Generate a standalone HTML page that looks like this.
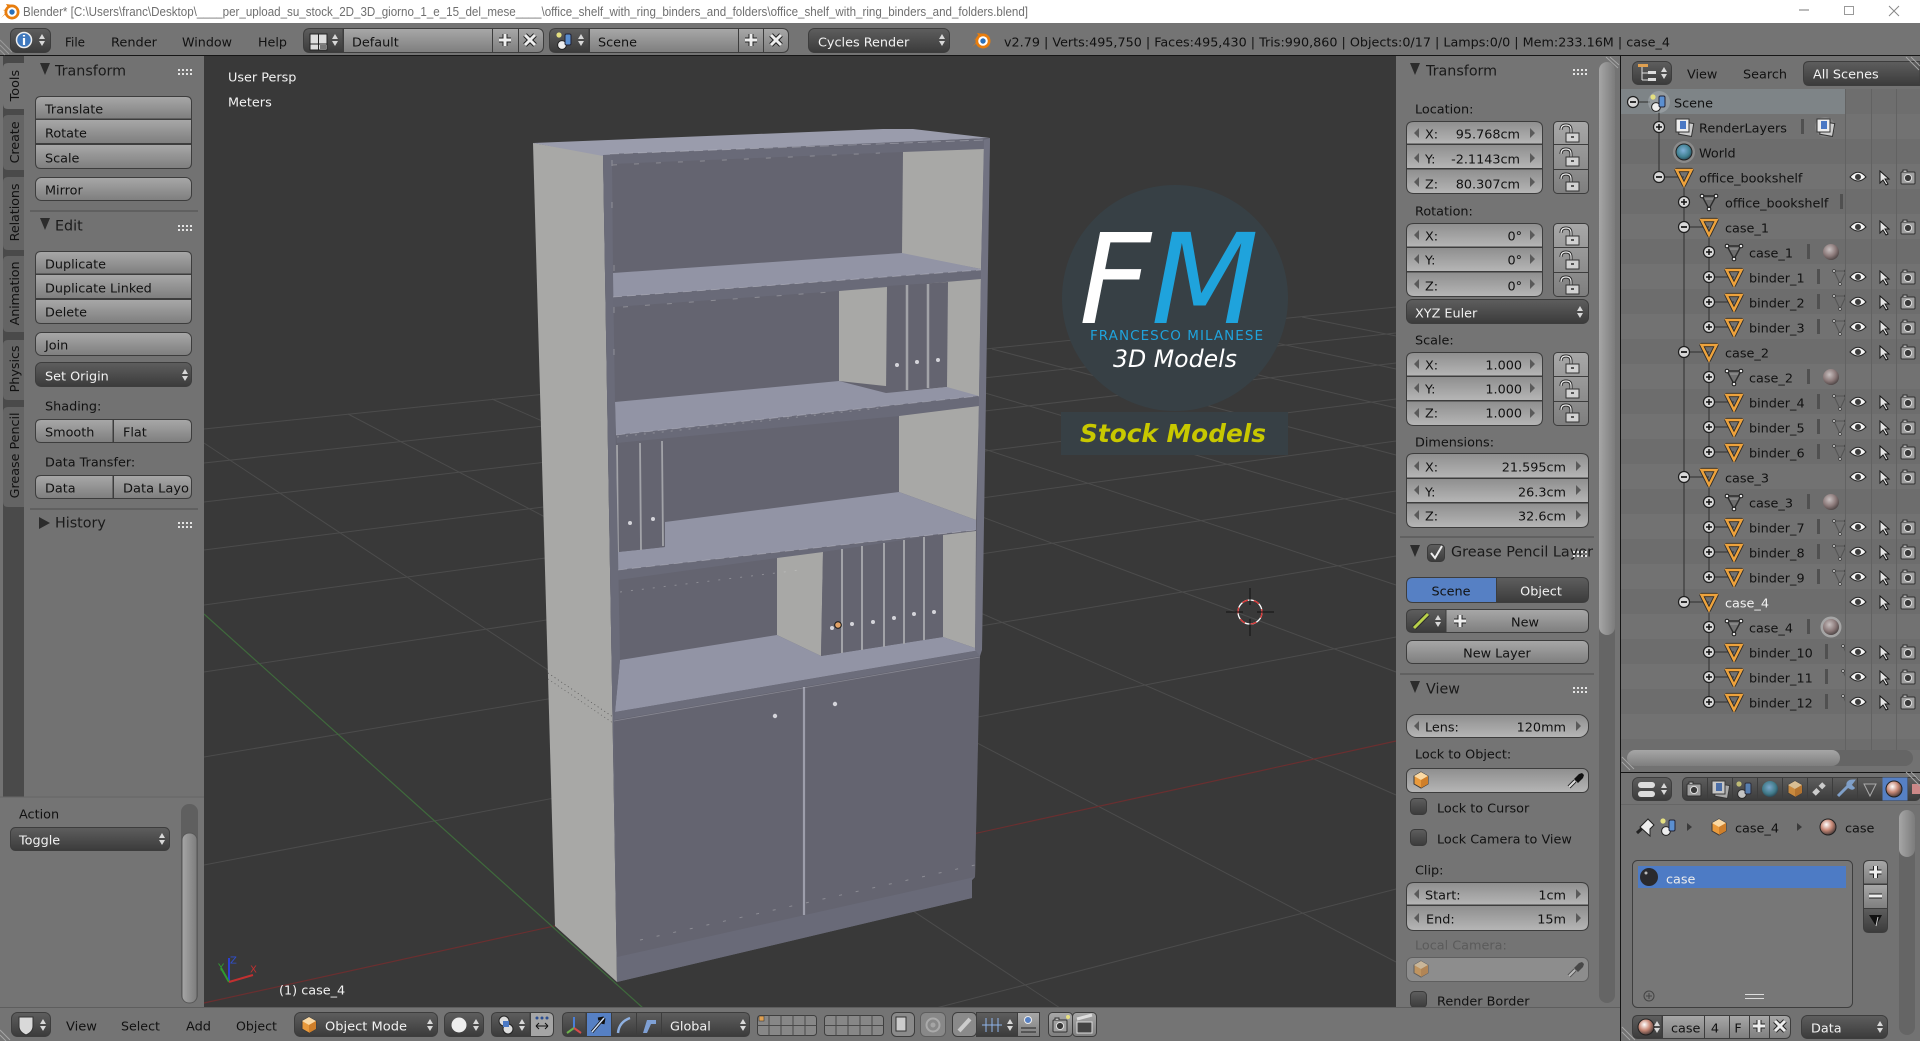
<!DOCTYPE html>
<html><head><meta charset="utf-8"><title>Blender</title>
<style>
html,body{margin:0;padding:0;background:#727272;width:1920px;height:1041px;overflow:hidden}
svg{display:block}
text{font-family:"DejaVu Sans","Liberation Sans",sans-serif;font-size:12.8px;fill:#111;translate:0 -.6px}
.w{fill:#f2f2f2}
.h{font-size:14.3px;fill:#1a1a1a}
.m{text-anchor:middle}
.e{text-anchor:end}
.g{stroke:#3d3d3d;stroke-width:1}
.ar{fill:#5a5a5a}
.k{translate:0 0}
</style></head><body>
<svg width="1920" height="1041" viewBox="0 0 1920 1041" xmlns="http://www.w3.org/2000/svg">
<defs>
<linearGradient id="btn" x1="0" y1="0" x2="0" y2="1"><stop offset="0" stop-color="#a8a8a8"/><stop offset="1" stop-color="#7e7e7e"/></linearGradient>
<linearGradient id="num" x1="0" y1="0" x2="0" y2="1"><stop offset="0" stop-color="#8e8e8e"/><stop offset="1" stop-color="#b6b6b6"/></linearGradient>
<linearGradient id="drk" x1="0" y1="0" x2="0" y2="1"><stop offset="0" stop-color="#5e5e5e"/><stop offset="1" stop-color="#3b3b3b"/></linearGradient>
<linearGradient id="thm" x1="0" y1="0" x2="1" y2="0"><stop offset="0" stop-color="#a6a6a6"/><stop offset="1" stop-color="#7c7c7c"/></linearGradient>
<linearGradient id="thh" x1="0" y1="0" x2="0" y2="1"><stop offset="0" stop-color="#a6a6a6"/><stop offset="1" stop-color="#7e7e7e"/></linearGradient>
<radialGradient id="mat" cx=".4" cy=".35" r=".75"><stop offset="0" stop-color="#c8c0c0"/><stop offset=".55" stop-color="#8a7878"/><stop offset="1" stop-color="#3c3636"/></radialGradient>
<radialGradient id="mt2" cx=".4" cy=".35" r=".7"><stop offset="0" stop-color="#ffffff"/><stop offset=".5" stop-color="#c98a78"/><stop offset="1" stop-color="#3a3030"/></radialGradient>
<radialGradient id="glb" cx=".45" cy=".4" r=".6"><stop offset="0" stop-color="#7fb0d8"/><stop offset=".7" stop-color="#3f7f8f"/><stop offset="1" stop-color="#2a4a5a"/></radialGradient>
<clipPath id="colclip"><rect x="1621" y="88" width="224" height="640"/></clipPath>
<symbol id="ob" overflow="visible"><path d="M-7.500-7H7.500L0 8Z" fill="none" stroke="#2a2a2a" stroke-width="4.200" stroke-linejoin="round"/><path d="M-7.500-7H7.500L0 8Z" fill="none" stroke="#eda23c" stroke-width="2.500"/></symbol>
<symbol id="me" overflow="visible"><path d="M-7-6H7L0 7Z" fill="none" stroke="#2c2c2c" stroke-width="1.4"/><path d="M-4-3H4" stroke="#999"/><g fill="#eee" stroke="#111"><circle cx="-7" cy="-6" r="1.8"/><circle cx="7" cy="-6" r="1.8"/><circle cx="0" cy="7" r="1.8"/></g></symbol>
<symbol id="ms" overflow="visible"><path d="M-6-6H6L0 7Z" fill="none" stroke="#555" stroke-width="1.1"/><g fill="#bbb" stroke="#333" stroke-width=".6"><circle cx="-6" cy="-6" r="1.4"/><circle cx="6" cy="-6" r="1.4"/><circle cx="0" cy="7" r="1.4"/></g></symbol>
<symbol id="ey" overflow="visible"><path d="M-8 0Q0-9.500 8 0Q0 8-8 0Z" fill="#f4f4f4" stroke="#222"/><circle r="3" fill="#3c3c3c"/></symbol>
<symbol id="cu" overflow="visible"><path d="M-4-7V5L-1 2 2 7 4 6 1 1H5Z" fill="#e4e4e4" stroke="#151515"/></symbol>
<symbol id="ca" overflow="visible"><rect x="-7" y="-5" width="14" height="12" rx="1" fill="#a0a0a0" stroke="#303030"/><path d="M-5-5V-7H-1V-5" fill="#bbb" stroke="#303030"/><circle cy="1" r="3.6" fill="#3a3a3a" stroke="#e0e0e0"/></symbol>
<symbol id="pl" overflow="visible"><circle r="5.5" fill="#d8d8d8" stroke="#1e1e1e" stroke-width="1.2"/><path d="M-3 0H3M0-3V3" stroke="#111" stroke-width="1.5"/></symbol>
<symbol id="mn" overflow="visible"><circle r="5.5" fill="#d8d8d8" stroke="#1e1e1e" stroke-width="1.2"/><path d="M-3 0H3" stroke="#111" stroke-width="1.7"/></symbol>
<symbol id="ma" overflow="visible"><circle r="8" fill="url(#mat)"/></symbol>
<symbol id="lk" overflow="visible"><path d="M-9-4Q-9-9-4-9Q1-9 1-4V-1" fill="none" stroke="#222" stroke-width="3"/><path d="M-9-4Q-9-9-4-9Q1-9 1-4V-1" fill="none" stroke="#eee" stroke-width="1.2"/><rect x="-4" y="-1" width="13" height="9" fill="#d2d2d2" stroke="#333"/><rect x="1" y="2" width="3" height="2" fill="#555"/></symbol>
<symbol id="ud" overflow="visible"><path d="M-3-1 0-6 3-1ZM-3 1 0 6 3 1Z" fill="#d8d8d8"/></symbol>
<symbol id="tr" overflow="visible"><path d="M0-7H10L5 5Z" fill="#2c2c2c"/></symbol>
<symbol id="dt" overflow="visible"><g fill="#e4e4e4"><rect width="2" height="2"/><rect x="4" width="2" height="2"/><rect x="8" width="2" height="2"/><rect x="12" width="2" height="2"/><rect y="4" width="2" height="2"/><rect x="4" y="4" width="2" height="2"/><rect x="8" y="4" width="2" height="2"/><rect x="12" y="4" width="2" height="2"/></g></symbol>
<symbol id="cb" overflow="visible"><path d="M0-8 7-4V4L0 8-7 4V-4Z" fill="#e99a3c" stroke="#3a3a3a"/><path d="M0-8 7-4 0 0-7-4Z" fill="#fad9a4"/><path d="M0 0 7-4V4L0 8Z" fill="#cf7f2a"/></symbol>
<symbol id="sc" overflow="visible"><circle cx="-3" cy="4" r="4.4" fill="#eee" stroke="#222"/><rect x="0" y="-7" width="6" height="11" rx="1.5" fill="#5b8fd0" stroke="#223"/><circle cx="-6" cy="-6" r="2.6" fill="#e4df80"/></symbol>
<symbol id="rl" overflow="visible"><rect x="-4" y="-5" width="13" height="13" fill="#ccc" stroke="#333" transform="rotate(10)"/><rect x="-8" y="-8" width="13" height="13" fill="#eee" stroke="#333"/><rect x="-4" y="-6" width="6" height="8" fill="#4a78c4"/></symbol>
<symbol id="ed" overflow="visible"><path d="M-7 7-1 1" stroke="#222" stroke-width="4"/><path d="M-7 7-1 1" stroke="#ddd" stroke-width="2"/><path d="M-2-1 3-6 6-7 8-5 7-2 2 3Z" fill="#111"/></symbol>
<symbol id="pb" overflow="visible"><path d="M-6 0H6M0-6V6" stroke="#222" stroke-width="5"/><path d="M-6 0H6M0-6V6" stroke="#eee" stroke-width="3"/></symbol>
<symbol id="xb" overflow="visible"><path d="M-5-5 5 5M5-5-5 5" stroke="#222" stroke-width="5"/><path d="M-5-5 5 5M5-5-5 5" stroke="#eee" stroke-width="3"/></symbol>
<symbol id="bl" overflow="visible"><path d="M-9 7-2 1-7-1-1-2-4-7 3-6Z" fill="#e87d0d"/><circle cx="2" cy="1" r="7.500" fill="#e87d0d"/><circle cx="2" cy="1" r="4.800" fill="#fff"/><circle cx="2" cy="1" r="2.700" fill="#2a6fb8"/></symbol>
</defs>

<!-- base -->
<rect width="1920" height="1041" fill="#727272"/>
<!-- titlebar -->
<rect width="1920" height="23" fill="#fff"/>
<use href="#bl" x="10" y="11"/>
<text class="k" x="23" y="16" textLength="1005" lengthAdjust="spacingAndGlyphs" style="font-family:'Liberation Sans',sans-serif;font-size:13px;fill:#6f6f6f">Blender* [C:\Users\franc\Desktop\____per_upload_su_stock_2D_3D_giorno_1_e_15_del_mese____\office_shelf_with_ring_binders_and_folders\office_shelf_with_ring_binders_and_folders.blend]</text>
<path d="M1799 10H1809" stroke="#777"/><rect x="1844.500" y="6.500" width="9" height="8" fill="none" stroke="#999"/><path d="M1889 6 1899 16M1899 6 1889 16" stroke="#888"/>

<!-- top header -->
<rect y="23" width="1920" height="32" fill="#747474"/>
<rect y="55" width="1920" height="1" fill="#161616"/>
<path d="M0 45 9 54M0 50 5 55M0 40 12 52" stroke="#9a9a9a"/>
<rect class="g" x="10.500" y="28.500" width="40" height="24" rx="6" fill="url(#drk)"/>
<circle cx="24" cy="40" r="7.500" fill="#3f78bd" stroke="#eee" stroke-width="1.500"/><path d="M24 38V45M24 35V36.500" stroke="#fff" stroke-width="2.200"/>
<use href="#ud" x="42" y="40"/>
<text x="65" y="47" textLength="20" lengthAdjust="spacingAndGlyphs">File</text>
<text x="111" y="47" textLength="46" lengthAdjust="spacingAndGlyphs">Render</text>
<text x="182" y="47" textLength="50" lengthAdjust="spacingAndGlyphs">Window</text>
<text x="258" y="47" textLength="29" lengthAdjust="spacingAndGlyphs">Help</text>

<path class="g" d="M343 28.500H310Q303.500 28.500 303.500 35V46Q303.500 52.500 310 52.500H343Z" fill="url(#drk)"/>
<rect class="g" x="343.500" y="28.500" width="149" height="24" fill="url(#btn)"/>
<path class="g" d="M492.500 28.500H537Q543.500 28.500 543.500 35V46Q543.500 52.500 537 52.500H492.500Z" fill="url(#btn)"/>
<path d="M518.500 28.500V52.500" stroke="#3d3d3d"/>
<rect x="310" y="34" width="17" height="16" fill="#ddd" stroke="#222"/><path d="M318.500 34V50M310 44H327" stroke="#222"/><rect x="320" y="45" width="6" height="4" fill="#777"/>
<use href="#ud" x="335" y="40"/>
<text x="352" y="47">Default</text>
<use href="#pb" x="505" y="40"/><use href="#xb" x="530" y="40"/>

<path class="g" d="M589 28.500H556Q549.500 28.500 549.500 35V46Q549.500 52.500 556 52.500H589Z" fill="url(#drk)"/>
<use href="#sc" x="565" y="41"/><use href="#ud" x="581" y="40"/>
<rect class="g" x="589.500" y="28.500" width="149" height="24" fill="url(#btn)"/>
<path class="g" d="M738.500 28.500H782Q788.500 28.500 788.500 35V46Q788.500 52.500 782 52.500H738.500Z" fill="url(#btn)"/>
<path d="M763.500 28.500V52.500" stroke="#3d3d3d"/>
<text x="598" y="47">Scene</text>
<use href="#pb" x="751" y="40"/><use href="#xb" x="776" y="40"/>

<rect class="g" x="808.500" y="28.500" width="141" height="24" rx="6" fill="url(#drk)"/>
<text class="w" x="818" y="47">Cycles Render</text>
<use href="#ud" x="942" y="40"/>
<use href="#bl" x="981" y="40"/>
<text x="1004" y="47" textLength="666" lengthAdjust="spacingAndGlyphs">v2.79 | Verts:495,750 | Faces:495,430 | Tris:990,860 | Objects:0/17 | Lamps:0/0 | Mem:233.16M | case_4</text>

<!-- viewport -->
<rect x="204" y="56" width="1192" height="951" fill="#393939"/>
<g stroke="#4c4c4c" stroke-width="1" fill="none">
<path d="M204 429 1396 307M204 463 1396 333M204 502 1396 363M204 550 1396 399M204 605 1396 441M204 672 1396 491M204 757 1396 556M204 865 1396 637"/>
<path d="M936 1008 1396 889"/>
<path d="M204 443 1060 1008M348 414 1396 962M492 399 1396 795M630 385 1396 672M754 373 1396 585M873 360 1396 514M992 349 1396 455M1100 337 1396 408M1203 327 1396 369M1302 317 1396 336"/>
</g>
<path d="M204 1003 1396 741" stroke="#6a2f30" stroke-width="1.200"/>
<path d="M204 614 643 1008" stroke="#3f6a3c" stroke-width="1.200"/>

<!-- bookshelf -->
<path d="M533 143 555 926 617 982 603 155Z" fill="#a8a8a6"/>
<path d="M533 143 883 129 913 129 990 138 603 156Z" fill="#9a9cac"/>
<path d="M603 155 990 138 975 877 972 880 972 898 617 982Z" fill="#686977"/>
<path d="M610 154 984 140 980 650 614 720Z" fill="#646470"/>
<path d="M610 154 984 140 984 149 903 152 611 164Z" fill="#696a78"/>
<path d="M903 152 984 149 981 269 902 254Z" fill="#a8a8a6"/>
<path d="M613 273 902 253 981 269 981 270 613 297Z" fill="#9294a5"/>
<path d="M613 297 981 270 981 279 839 291 613 307Z" fill="#696a78"/>
<path d="M839 291 981 279 979 396 839 381Z" fill="#a8a8a6"/>
<path d="M887 286 948 282 947 387 886 393Z" fill="#646470"/>
<path d="M907 285 V390M928 284 V388" stroke="#a2a3a8" stroke-width="2.500"/>
<path d="M615 402 839 381 886 393 947 387 979 396 616 435Z" fill="#9294a5"/>
<path d="M616 435 979 396 979 406 899 416 617 443Z" fill="#696a78"/>
<path d="M899 416 979 406 976 520 899 492Z" fill="#a8a8a6"/>
<path d="M665 522 899 492 976 520 976 530 618 570 618 552 665 547Z" fill="#9294a5"/>
<path d="M618 443 663 441 665 547 618 552Z" fill="#646470"/>
<path d="M640 443 641 550M662 441 663 546M617 445 618 552" stroke="#a2a3a8" stroke-width="1.800"/>
<path d="M618 570 976 531 976 535 943 535 823 552 777 558 618 580Z" fill="#696a78"/>
<path d="M777 558 823 552 821 656 777 635Z" fill="#a8a8a6"/>
<path d="M943 535 976 531 975 648 943 637Z" fill="#a8a8a6"/>
<path d="M620 660 777 635 821 656 943 637 975 648 980 650 615 712Z" fill="#9294a5"/>
<path d="M823 552 943 534 943 637 821 656Z" fill="#646470"/>
<path d="M842 549V653M862 546V650M884 543V647M904 540V644M924 537V640" stroke="#a2a3a8" stroke-width="2"/>
<path d="M615 712 981 650 980 656 614 720Z" fill="#6c6d7b"/>
<path d="M614 720 980 656 975 877 617 958Z" fill="#646470"/>
<path d="M617 957 975 877 972 880 972 898 617 982Z" fill="#696a78"/>
<path d="M804 687V915" stroke="#9d9eab" stroke-width="2.200"/>
<path d="M603 155 612 155 613 273 615 402 618 552 620 660 615 712 614 720 612.600 722Z" fill="#6a6b79"/>
<path d="M984 140 990 138 982 650 980 656 975 650 979 396 981 270Z" fill="#717281"/>
<g stroke="#d8d8d8" stroke-width="1" stroke-dasharray="5 17" fill="none" opacity=".35">
<path d="M612 165 880 153M623 307 830 292"/>
<path d="M617 437 880 408" stroke-dasharray="2 7"/>
<path d="M620 592 800 570" stroke-dasharray="2 9"/>
<path d="M612 160V220M614 265V370" stroke-dasharray="6 36"/>
<path d="M640 940 975 865" stroke-dasharray="3 14"/>
</g>
<path d="M610 154 984 140" stroke="#d8d8e0" stroke-width=".8" stroke-dasharray="9 5" opacity=".4"/>
<path d="M613 297 981 270" stroke="#d8d8e0" stroke-width=".8" stroke-dasharray="9 5" opacity=".4"/>
<path d="M616 435 979 396" stroke="#d8d8e0" stroke-width=".8" stroke-dasharray="9 5" opacity=".35"/>
<path d="M618 570 976 530" stroke="#d8d8e0" stroke-width=".8" stroke-dasharray="9 5" opacity=".35"/>
<path d="M614 721 980 657" stroke="#d8d8e0" stroke-width=".8" opacity=".3"/>
<path d="M548 673 613 717" stroke="#555" stroke-width=".8" stroke-dasharray="1 3"/>
<path d="M548 679 613 723" stroke="#666" stroke-width=".8" stroke-dasharray="1 3"/>
<g fill="#d4d4da"><circle cx="897" cy="365" r="2"/><circle cx="917" cy="362" r="2"/><circle cx="938" cy="360" r="2"/><circle cx="630" cy="523" r="2"/><circle cx="653" cy="519" r="2"/><circle cx="832" cy="628" r="2"/><circle cx="852" cy="624" r="2"/><circle cx="873" cy="622" r="2"/><circle cx="894" cy="618" r="2"/><circle cx="914" cy="614" r="2"/><circle cx="934" cy="612" r="2"/><circle cx="775" cy="716" r="2.200"/><circle cx="835" cy="704" r="2.200"/></g>
<circle cx="838" cy="625" r="3.300" fill="#e1a267" stroke="#151515"/>

<!-- 3D cursor -->
<circle cx="1250" cy="612" r="12" fill="none" stroke="#fff" stroke-width="1.300"/>
<circle cx="1250" cy="612" r="12" fill="none" stroke="#d33" stroke-width="1.300" stroke-dasharray="6 6"/>
<path d="M1226 612H1243M1257 612H1274M1250 588V605M1250 619V636" stroke="#111" stroke-width="1"/>

<!-- logo -->
<circle cx="1175" cy="298" r="113" fill="#374045"/>
<rect x="1061" y="412" width="227" height="43" fill="#374045"/>
<text class="k" x="1079" y="323" style="font-size:125px;font-style:italic;fill:#fff">F</text>
<text class="k" x="1151" y="323" style="font-size:125px;font-style:italic;fill:#1fa3dc">M</text>
<text class="k" x="1090" y="340" textLength="173" lengthAdjust="spacing" style="font-size:13.500px;fill:#1fa3dc">FRANCESCO MILANESE</text>
<text class="k" x="1113" y="367" textLength="124" lengthAdjust="spacingAndGlyphs" style="font-size:24px;font-style:italic;fill:#fff">3D Models</text>
<text class="k" x="1080" y="442" textLength="186" lengthAdjust="spacingAndGlyphs" style="font-size:25px;font-style:italic;font-weight:bold;fill:#c8c800">Stock Models</text>

<!-- viewport labels -->
<text class="w" x="228" y="82">User Persp</text>
<text class="w" x="228" y="107">Meters</text>
<text class="w" x="279" y="995">(1) case_4</text>
<path d="M229 982V958" stroke="#2d3fd0" stroke-width="2"/><path d="M229 982 221 968" stroke="#2f9a2f" stroke-width="2"/><path d="M229 982 253 975" stroke="#c23030" stroke-width="2"/>
<text x="230" y="964" style="font-size:10px;fill:#3050d0">Z</text><text x="250" y="973" style="font-size:10px;fill:#c03030">X</text><text x="218" y="971" style="font-size:10px;fill:#30a030">Y</text>

<!-- left tool region -->
<rect x="0" y="56" width="204" height="952" fill="#727272"/>
<rect x="3" y="56" width="21" height="741" fill="#4a4a4a"/>
<path d="M24 63H8Q3 63 3 68V104Q3 109 8 109H24Z" fill="#727272"/>
<path d="M24 115H8Q3 115 3 120V165Q3 170 8 170H24Z" fill="#646464"/>
<path d="M24 177H8Q3 177 3 182V245Q3 250 8 250H24Z" fill="#646464"/>
<path d="M24 256H8Q3 256 3 261V327Q3 332 8 332H24Z" fill="#646464"/>
<path d="M24 340H8Q3 340 3 345V395Q3 400 8 400H24Z" fill="#646464"/>
<path d="M24 407H8Q3 407 3 412V502Q3 507 8 507H24Z" fill="#646464"/>
<text transform="translate(19 102) rotate(-90)">Tools</text>
<text transform="translate(19 164) rotate(-90)" textLength="42">Create</text>
<text transform="translate(19 242) rotate(-90)" textLength="58">Relations</text>
<text transform="translate(19 326) rotate(-90)" textLength="64">Animation</text>
<text transform="translate(19 393) rotate(-90)" textLength="47">Physics</text>
<text transform="translate(19 499) rotate(-90)" textLength="86" lengthAdjust="spacingAndGlyphs">Grease Pencil</text>

<use href="#tr" x="40" y="70"/>
<text class="h" x="55" y="76">Transform</text><use href="#dt" x="178" y="69"/>
<path class="g" d="M35.500 119V102Q35.500 96.500 41 96.500H186Q191.500 96.500 191.500 102V119Z" fill="url(#btn)"/>
<rect class="g" x="35.500" y="119.500" width="156" height="24" fill="url(#btn)"/>
<path class="g" d="M35.500 144.500V163Q35.500 168.500 41 168.500H186Q191.500 168.500 191.500 163V144.500Z" fill="url(#btn)"/>
<text x="45" y="114">Translate</text><text x="45" y="138">Rotate</text><text x="45" y="163">Scale</text>
<rect class="g" x="35.500" y="177.500" width="156" height="23" rx="6" fill="url(#btn)"/>
<text x="45" y="195">Mirror</text>
<path d="M30 211H198" stroke="#4e4e4e"/>
<use href="#tr" x="40" y="225"/>
<text class="h" x="55" y="231">Edit</text><use href="#dt" x="178" y="225"/>
<path class="g" d="M35.500 274V257Q35.500 251.500 41 251.500H186Q191.500 251.500 191.500 257V274Z" fill="url(#btn)"/>
<rect class="g" x="35.500" y="274.500" width="156" height="24" fill="url(#btn)"/>
<path class="g" d="M35.500 299.500V318Q35.500 323.500 41 323.500H186Q191.500 323.500 191.500 318V299.500Z" fill="url(#btn)"/>
<text x="45" y="269">Duplicate</text><text x="45" y="293">Duplicate Linked</text><text x="45" y="317">Delete</text>
<rect class="g" x="35.500" y="332.500" width="156" height="23" rx="6" fill="url(#btn)"/>
<text x="45" y="350">Join</text>
<rect class="g" x="35.500" y="362.500" width="156" height="24" rx="6" fill="url(#drk)"/>
<text class="w" x="45" y="381">Set Origin</text><use href="#ud" x="185" y="375"/>
<text x="45" y="411">Shading:</text>
<path class="g" d="M113 419.500H41Q35.500 419.500 35.500 425V437Q35.500 442.500 41 442.500H113Z" fill="url(#btn)"/>
<path class="g" d="M113.500 419.500H186Q191.500 419.500 191.500 425V437Q191.500 442.500 186 442.500H113.500Z" fill="url(#btn)"/>
<text x="45" y="437">Smooth</text><text x="123" y="437">Flat</text>
<text x="45" y="467">Data Transfer:</text>
<path class="g" d="M113 475.500H41Q35.500 475.500 35.500 481V493Q35.500 498.500 41 498.500H113Z" fill="url(#btn)"/>
<path class="g" d="M113.500 475.500H186Q191.500 475.500 191.500 481V493Q191.500 498.500 186 498.500H113.500Z" fill="url(#btn)"/>
<text x="45" y="493">Data</text><text x="123" y="493" textLength="66" lengthAdjust="spacingAndGlyphs">Data Layo</text>
<path d="M30 509H198" stroke="#4e4e4e"/>
<path d="M39 517 50 523 39 529Z" fill="#2c2c2c"/>
<text class="h" x="55" y="528">History</text><use href="#dt" x="178" y="522"/>
<rect y="797" width="204" height="211" fill="#747474"/><path d="M0 797H204" stroke="#656565"/>
<text x="19" y="819">Action</text>
<rect class="g" x="10.500" y="827.500" width="159" height="23" rx="5" fill="url(#drk)"/>
<text class="w" x="19" y="845">Toggle</text><use href="#ud" x="162" y="839"/>
<rect x="181" y="804" width="17" height="199" rx="8" fill="#5f5f5f"/>
<rect x="182" y="833" width="15" height="170" rx="7" fill="url(#thm)" stroke="#585858"/>

<!-- N panel -->
<rect x="1396" y="56" width="224" height="952" fill="#747474"/>
<rect x="1599" y="62" width="16" height="941" rx="8" fill="#656565"/>
<rect x="1599" y="62" width="16" height="573" rx="8" fill="url(#thm)"/>
<path d="M1606 57 1618 68M1610 57 1619 65" stroke="#a5a5a5"/>
<rect x="1620" y="56" width="1" height="985" fill="#141414"/>

<use href="#tr" x="1410" y="70"/>
<text class="h" x="1426" y="76">Transform</text><use href="#dt" x="1573" y="69"/>
<text x="1415" y="114">Location:</text>
<path class="g" d="M1406.500 144V128Q1406.500 121.500 1414 121.500H1535Q1542.500 121.500 1542.500 128V144Z" fill="url(#num)"/>
<rect class="g" x="1406.500" y="144.500" width="136" height="24" fill="url(#num)"/>
<path class="g" d="M1406.500 169V186Q1406.500 193.500 1414 193.500H1535Q1542.500 193.500 1542.500 186V169Z" fill="url(#num)"/>
<text x="1425" y="139">X:</text><text class="e" x="1520" y="139">95.768cm</text>
<text x="1425" y="164">Y:</text><text class="e" x="1520" y="164">-2.1143cm</text>
<text x="1425" y="189">Z:</text><text class="e" x="1520" y="189">80.307cm</text>
<path class="ar" d="M1419 128 1414 133 1419 138ZM1530 128 1535 133 1530 138ZM1419 153 1414 158 1419 163ZM1530 153 1535 158 1530 163ZM1419 177 1414 182 1419 187ZM1530 177 1535 182 1530 187Z"/>
<rect class="g" x="1553.500" y="121.500" width="35" height="72" rx="4" fill="url(#btn)"/><path d="M1553.500 144.500H1588.500M1553.500 169.500H1588.500" stroke="#3d3d3d"/>
<use href="#lk" x="1570" y="134"/><use href="#lk" x="1570" y="158"/><use href="#lk" x="1570" y="183"/>

<text x="1415" y="216">Rotation:</text>
<path class="g" d="M1406.500 247V230Q1406.500 223.500 1414 223.500H1535Q1542.500 223.500 1542.500 230V247Z" fill="url(#num)"/>
<rect class="g" x="1406.500" y="247.500" width="136" height="24" fill="url(#num)"/>
<path class="g" d="M1406.500 272V289Q1406.500 296.500 1414 296.500H1535Q1542.500 296.500 1542.500 289V272Z" fill="url(#num)"/>
<text x="1425" y="241">X:</text><text class="e" x="1522" y="241">0°</text>
<text x="1425" y="265">Y:</text><text class="e" x="1522" y="265">0°</text>
<text x="1425" y="291">Z:</text><text class="e" x="1522" y="291">0°</text>
<path class="ar" d="M1419 230 1414 235 1419 240ZM1530 230 1535 235 1530 240ZM1419 254 1414 259 1419 264ZM1530 254 1535 259 1530 264ZM1419 279 1414 284 1419 289ZM1530 279 1535 284 1530 289Z"/>
<rect class="g" x="1553.500" y="223.500" width="35" height="73" rx="4" fill="url(#btn)"/><path d="M1553.500 247.500H1588.500M1553.500 272.500H1588.500" stroke="#3d3d3d"/>
<use href="#lk" x="1570" y="237"/><use href="#lk" x="1570" y="261"/><use href="#lk" x="1570" y="286"/>
<rect class="g" x="1406.500" y="299.500" width="182" height="24" rx="6" fill="url(#drk)"/>
<text class="w" x="1415" y="318">XYZ Euler</text><use href="#ud" x="1580" y="312"/>

<text x="1415" y="345">Scale:</text>
<path class="g" d="M1406.500 376V359Q1406.500 352.500 1414 352.500H1535Q1542.500 352.500 1542.500 359V376Z" fill="url(#num)"/>
<rect class="g" x="1406.500" y="376.500" width="136" height="24" fill="url(#num)"/>
<path class="g" d="M1406.500 401V418Q1406.500 425.500 1414 425.500H1535Q1542.500 425.500 1542.500 418V401Z" fill="url(#num)"/>
<text x="1425" y="370">X:</text><text class="e" x="1522" y="370">1.000</text>
<text x="1425" y="394">Y:</text><text class="e" x="1522" y="394">1.000</text>
<text x="1425" y="418">Z:</text><text class="e" x="1522" y="418">1.000</text>
<path class="ar" d="M1419 359 1414 364 1419 369ZM1530 359 1535 364 1530 369ZM1419 383 1414 388 1419 393ZM1530 383 1535 388 1530 393ZM1419 408 1414 413 1419 418ZM1530 408 1535 413 1530 418Z"/>
<rect class="g" x="1553.500" y="352.500" width="35" height="73" rx="4" fill="url(#btn)"/><path d="M1553.500 376.500H1588.500M1553.500 401.500H1588.500" stroke="#3d3d3d"/>
<use href="#lk" x="1570" y="365"/><use href="#lk" x="1570" y="390"/><use href="#lk" x="1570" y="414"/>

<text x="1415" y="447">Dimensions:</text>
<path class="g" d="M1406.500 478V460Q1406.500 453.500 1414 453.500H1581Q1588.500 453.500 1588.500 460V478Z" fill="url(#num)"/>
<rect class="g" x="1406.500" y="478.500" width="182" height="24" fill="url(#num)"/>
<path class="g" d="M1406.500 503V520Q1406.500 527.500 1414 527.500H1581Q1588.500 527.500 1588.500 520V503Z" fill="url(#num)"/>
<text x="1425" y="472">X:</text><text class="e" x="1566" y="472">21.595cm</text>
<text x="1425" y="497">Y:</text><text class="e" x="1566" y="497">26.3cm</text>
<text x="1425" y="521">Z:</text><text class="e" x="1566" y="521">32.6cm</text>
<path class="ar" d="M1419 461 1414 466 1419 471ZM1576 461 1581 466 1576 471ZM1419 485 1414 490 1419 495ZM1576 485 1581 490 1576 495ZM1419 510 1414 515 1419 520ZM1576 510 1581 515 1576 520Z"/>
<path d="M1400 537H1594" stroke="#4e4e4e"/>
<use href="#tr" x="1410" y="552"/>
<rect x="1427.500" y="544.500" width="17" height="17" rx="4" fill="url(#drk)" stroke="#3a3a3a"/><path d="M1431 553 1435 558 1442 546" fill="none" stroke="#eee" stroke-width="2"/>
<text class="h" x="1451" y="557" textLength="142" lengthAdjust="spacingAndGlyphs">Grease Pencil Layer</text><use href="#dt" x="1573" y="551"/>
<path class="g" d="M1496.500 577.500H1413Q1406.500 577.500 1406.500 584V596Q1406.500 602.500 1413 602.500H1496.500Z" fill="#5680c4"/>
<path class="g" d="M1496.500 577.500H1582Q1588.500 577.500 1588.500 584V596Q1588.500 602.500 1582 602.500H1496.500Z" fill="url(#drk)"/>
<text class="m" x="1451" y="596">Scene</text><text class="m w" x="1541" y="596">Object</text>
<path class="g" d="M1446 609.500H1413Q1406.500 609.500 1406.500 615V627Q1406.500 632.500 1413 632.500H1446Z" fill="url(#drk)"/>
<path class="g" d="M1446 609.500H1582Q1588.500 609.500 1588.500 615V627Q1588.500 632.500 1582 632.500H1446Z" fill="url(#btn)"/>
<path d="M1414 628 1428 614" stroke="#2a2a2a" stroke-width="5"/><path d="M1414 628 1428 614" stroke="#b8d04a" stroke-width="3"/><use href="#ud" x="1438" y="621"/><use href="#pb" x="1460" y="621"/>
<text class="m" x="1525" y="627">New</text>
<rect class="g" x="1406.500" y="640.500" width="182" height="23" rx="6" fill="url(#btn)"/>
<text class="m" x="1497" y="658">New Layer</text>
<path d="M1400 674H1594" stroke="#4e4e4e"/>
<use href="#tr" x="1410" y="688"/>
<text class="h" x="1426" y="694">View</text><use href="#dt" x="1573" y="687"/>
<rect class="g" x="1406.500" y="714.500" width="182" height="23" rx="10" fill="url(#num)"/>
<text x="1425" y="732">Lens:</text><text class="e" x="1566" y="732">120mm</text>
<path class="ar" d="M1419 721 1414 726 1419 731ZM1576 721 1581 726 1576 731Z"/>
<text x="1415" y="759">Lock to Object:</text>
<rect class="g" x="1406.500" y="768.500" width="182" height="24" rx="6" fill="url(#num)"/>
<use href="#cb" x="1421" y="780"/><use href="#ed" x="1576" y="780"/>
<rect x="1410.500" y="798.500" width="16" height="16" rx="4" fill="url(#drk)" stroke="#3a3a3a"/>
<text x="1437" y="813">Lock to Cursor</text>
<rect x="1410.500" y="829.500" width="16" height="16" rx="4" fill="url(#drk)" stroke="#3a3a3a"/>
<text x="1437" y="844">Lock Camera to View</text>
<text x="1415" y="875">Clip:</text>
<path class="g" d="M1406.500 905V890Q1406.500 882.500 1414 882.500H1581Q1588.500 882.500 1588.500 890V905Z" fill="url(#num)"/>
<path class="g" d="M1406.500 905.500V923Q1406.500 930.500 1414 930.500H1581Q1588.500 930.500 1588.500 923V905.500Z" fill="url(#num)"/>
<text x="1425" y="900">Start:</text><text class="e" x="1566" y="900">1cm</text>
<text x="1426" y="924">End:</text><text class="e" x="1566" y="924">15m</text>
<path class="ar" d="M1419 889 1414 894 1419 899ZM1576 889 1581 894 1576 899ZM1419 913 1414 918 1419 923ZM1576 913 1581 918 1576 923Z"/>
<text x="1415" y="950" style="fill:#5b5b5b">Local Camera:</text>
<rect x="1406.500" y="957.500" width="182" height="24" rx="6" fill="#8d8d8d" stroke="#5f5f5f"/>
<use href="#cb" x="1421" y="969" opacity=".55"/><use href="#ed" x="1576" y="969" opacity=".55"/>
<rect x="1410.500" y="991.500" width="16" height="16" rx="4" fill="url(#drk)" stroke="#3a3a3a"/>
<text x="1437" y="1006">Render Border</text>

<!-- bottom bar -->
<rect x="0" y="1008" width="1620" height="33" fill="#747474"/><path d="M0 1007.500H1620" stroke="#5e5e5e"/>
<path d="M0 1030 10 1040M0 1035 6 1041" stroke="#a5a5a5"/>
<rect class="g" x="11.500" y="1012.500" width="39" height="24" rx="6" fill="url(#drk)"/>
<path d="M19 1017H33V1026Q33 1032 26 1035Q19 1032 19 1026Z" fill="#d9d9d9" stroke="#333"/><use href="#ud" x="43" y="1025"/>
<text x="66" y="1031" textLength="31" lengthAdjust="spacingAndGlyphs">View</text>
<text x="121" y="1031" textLength="39" lengthAdjust="spacingAndGlyphs">Select</text>
<text x="186" y="1031" textLength="25" lengthAdjust="spacingAndGlyphs">Add</text>
<text x="236" y="1031" textLength="41" lengthAdjust="spacingAndGlyphs">Object</text>
<rect class="g" x="294.500" y="1012.500" width="143" height="24" rx="6" fill="url(#drk)"/>
<use href="#cb" x="309" y="1025"/><text class="w" x="325" y="1031" textLength="82" lengthAdjust="spacingAndGlyphs">Object Mode</text><use href="#ud" x="430" y="1025"/>
<rect class="g" x="444.500" y="1012.500" width="39" height="24" rx="6" fill="url(#drk)"/>
<circle cx="459" cy="1025" r="7.500" fill="#eee"/><use href="#ud" x="476" y="1025"/>
<path class="g" d="M530 1012.500H497Q491.500 1012.500 491.500 1018V1031Q491.500 1036.500 497 1036.500H530Z" fill="url(#drk)"/>
<path class="g" d="M530.500 1012.500H548Q553.500 1012.500 553.500 1018V1031Q553.500 1036.500 548 1036.500H530.500Z" fill="#a5a5a5"/>
<circle cx="504" cy="1021" r="5" fill="#ddd" stroke="#222"/><circle cx="508" cy="1029" r="5" fill="#ddd" stroke="#222"/><rect x="503" y="1021" width="6" height="6" fill="#4a78c4"/><use href="#ud" x="522" y="1025"/>
<path d="M536 1026H548M536 1026 539 1023M536 1026 539 1029M548 1026 545 1023M548 1026 545 1029" stroke="#111" fill="none"/><g fill="#2b4d90"><circle cx="537" cy="1018" r="1.500"/><circle cx="542" cy="1018" r="1.500"/><circle cx="547" cy="1018" r="1.500"/></g>
<path class="g" d="M586 1012.500H568Q562.500 1012.500 562.500 1018V1031Q562.500 1036.500 568 1036.500H586Z" fill="url(#drk)"/>
<rect class="g" x="586.500" y="1012.500" width="25" height="24" fill="#5680c4"/>
<rect class="g" x="611.500" y="1012.500" width="25" height="24" fill="url(#drk)"/>
<rect class="g" x="636.500" y="1012.500" width="25" height="24" fill="url(#drk)"/>
<path class="g" d="M661.500 1012.500H744Q749.500 1012.500 749.500 1018V1031Q749.500 1036.500 744 1036.500H661.500Z" fill="url(#drk)"/>
<path d="M574 1028V1017" stroke="#4a7fd8" stroke-width="2"/><path d="M574 1028 567 1033" stroke="#6cb34a" stroke-width="2"/><path d="M574 1028 581 1033" stroke="#d84a4a" stroke-width="2"/>
<path d="M592 1032 604 1018M604 1018 598 1019M604 1018 603 1024" stroke="#111" stroke-width="3" fill="none"/><path d="M592 1032 604 1018" stroke="#cfe0f8" stroke-width="1.500"/>
<path d="M618 1033Q619 1022 630 1018" fill="none" stroke="#8fb0e0" stroke-width="2.500"/>
<path d="M643 1033 647 1020H656V1024H651L647 1033Z" fill="#7fa0d4"/>
<text class="w" x="670" y="1031">Global</text><use href="#ud" x="743" y="1025"/>
<g fill="#878787" stroke="#3f3f3f">
<rect x="757.500" y="1015.500" width="59" height="20" rx="3"/>
<rect x="824.500" y="1015.500" width="59" height="20" rx="3"/>
</g>
<path d="M769 1015.500V1035.500M781 1015.500V1035.500M793 1015.500V1035.500M805 1015.500V1035.500M757.500 1025.500H816.500M836 1015.500V1035.500M848 1015.500V1035.500M860 1015.500V1035.500M872 1015.500V1035.500M824.500 1025.500H883.500" stroke="#4a4a4a"/>
<rect x="759" y="1016" width="5" height="5" fill="#e0a050" stroke="#3a3a3a" stroke-width=".6"/>
<rect class="g" x="891.500" y="1012.500" width="23" height="24" rx="5" fill="#8a8a8a"/><rect x="896" y="1017" width="10" height="14" fill="#ccc" stroke="#333"/>
<rect x="920.500" y="1012.500" width="25" height="24" rx="5" fill="#888" stroke="#5e5e5e"/><circle cx="933" cy="1025" r="6.500" fill="none" stroke="#aaa" stroke-width="2"/><circle cx="933" cy="1025" r="2.500" fill="#a5a5a5"/>
<rect class="g" x="952.500" y="1012.500" width="24" height="24" rx="5" fill="#8a8a8a"/><path d="M959 1031 970 1019" stroke="#ccc" stroke-width="4"/>
<rect class="g" x="976.500" y="1012.500" width="41" height="24" fill="url(#drk)"/><path d="M982 1025H1002M986 1018V1032M992 1018V1032M998 1018V1032" stroke="#8fb4ea"/><use href="#ud" x="1010" y="1025"/>
<rect class="g" x="1017.500" y="1012.500" width="22" height="24" fill="url(#btn)"/><path d="M1021 1032H1036M1021 1028H1036M1028 1024V1016" stroke="#222"/><circle cx="1028" cy="1020" r="3.500" fill="#5680c4" stroke="#eee"/>
<rect class="g" x="1048.500" y="1012.500" width="24" height="24" rx="4" fill="url(#btn)"/><use href="#ca" x="1060" y="1025"/><circle cx="1068" cy="1017" r="2" fill="#e8e080"/>
<rect class="g" x="1072.500" y="1012.500" width="24" height="24" rx="4" fill="url(#btn)"/><rect x="1077" y="1022" width="15" height="11" fill="#444" stroke="#ddd"/><path d="M1077 1019 1092 1015" stroke="#ddd" stroke-width="3"/>

<!-- outliner -->
<rect x="1621" y="56" width="299" height="985" fill="#727272"/>
<rect class="g" x="1632.500" y="61.500" width="39" height="23" rx="6" fill="url(#drk)"/>
<path d="M1642 66V80M1642 73H1650M1642 80H1650" stroke="#ddd" fill="none"/><rect x="1638" y="64" width="10" height="3" fill="#e0a050"/><rect x="1648" y="71" width="8" height="3" fill="#ddd"/><rect x="1648" y="78" width="8" height="3" fill="#ddd"/><use href="#ud" x="1664" y="73"/>
<text x="1687" y="79">View</text><text x="1743" y="79">Search</text>
<path class="g" d="M1920 61.500H1809Q1803.500 61.500 1803.500 67V79Q1803.500 85.500 1809 85.500H1920Z" fill="url(#drk)"/>
<text class="w" x="1813" y="79">All Scenes</text>
<path d="M1906 57 1919 70M1911 57 1920 66" stroke="#a5a5a5"/>
<g fill="#6d6d6d">
<rect x="1621" y="89" width="299" height="25" fill="#6e6e6e"/>
<rect x="1621" y="139" width="299" height="25"/><rect x="1621" y="189" width="299" height="25"/><rect x="1621" y="239" width="299" height="25"/><rect x="1621" y="289" width="299" height="25"/><rect x="1621" y="339" width="299" height="25"/><rect x="1621" y="389" width="299" height="25"/><rect x="1621" y="439" width="299" height="25"/><rect x="1621" y="489" width="299" height="25"/><rect x="1621" y="539" width="299" height="25"/><rect x="1621" y="589" width="299" height="25"/><rect x="1621" y="639" width="299" height="25"/><rect x="1621" y="689" width="299" height="25"/><rect x="1621" y="739" width="299" height="11"/>
</g>
<rect x="1621" y="89" width="224" height="25" fill="#7e8487"/>
<path d="M1845.500 89V750M1871.500 89V750M1896.500 89V750" stroke="#626262"/>
<g stroke="#2e2e2e" fill="none">
<path d="M1633 102H1650M1659 110V177M1659 177H1684M1684 185V602M1684 227H1709M1684 352H1709M1684 477H1709M1684 602H1709"/>
<path d="M1709 235V327M1709 277H1734M1709 302H1734M1709 327H1734M1709 360V452M1709 402H1734M1709 427H1734M1709 452H1734M1709 485V577M1709 527H1734M1709 552H1734M1709 577H1734M1709 610V702M1709 652H1734M1709 677H1734M1709 702H1734"/>
</g>
<!-- rows -->
<circle cx="1659" cy="102" r="11" fill="#a8aeb2" opacity=".55"/><use href="#mn" x="1633" y="102"/><use href="#sc" x="1659" y="103"/><text x="1674" y="108">Scene</text>
<use href="#pl" x="1659" y="127"/><use href="#rl" x="1684" y="127"/><text x="1699" y="133">RenderLayers</text><rect x="1801" y="119" width="3" height="15" fill="#505050"/><circle cx="1825" cy="127" r="10" fill="#909090" opacity=".6"/><use href="#rl" x="1825" y="127"/>
<circle cx="1684" cy="152" r="11" fill="#8a8a8a"/><circle cx="1684" cy="152" r="8" fill="url(#glb)" stroke="#222"/><text x="1699" y="158">World</text>
<use href="#mn" x="1659" y="177"/><use href="#ob" x="1684" y="177"/><text x="1699" y="183">office_bookshelf</text>
<use href="#pl" x="1684" y="202"/><use href="#me" x="1709" y="202"/><text x="1725" y="208">office_bookshelf</text><rect x="1840" y="194" width="3" height="15" fill="#505050"/>
<use href="#mn" x="1684" y="227"/><use href="#ob" x="1709" y="227"/><text x="1725" y="233">case_1</text>
<use href="#pl" x="1709" y="252"/><use href="#me" x="1734" y="252"/><text x="1749" y="258">case_1</text><rect x="1807" y="244" width="3" height="15" fill="#505050"/><use href="#ma" x="1831" y="252"/>
<use href="#pl" x="1709" y="277"/><use href="#ob" x="1734" y="277"/><text x="1749" y="283">binder_1</text><rect x="1817" y="269" width="3" height="15" fill="#505050"/>
<use href="#pl" x="1709" y="302"/><use href="#ob" x="1734" y="302"/><text x="1749" y="308">binder_2</text><rect x="1817" y="294" width="3" height="15" fill="#505050"/>
<use href="#pl" x="1709" y="327"/><use href="#ob" x="1734" y="327"/><text x="1749" y="333">binder_3</text><rect x="1817" y="319" width="3" height="15" fill="#505050"/>
<use href="#mn" x="1684" y="352"/><use href="#ob" x="1709" y="352"/><text x="1725" y="358">case_2</text>
<use href="#pl" x="1709" y="377"/><use href="#me" x="1734" y="377"/><text x="1749" y="383">case_2</text><rect x="1807" y="369" width="3" height="15" fill="#505050"/><use href="#ma" x="1831" y="377"/>
<use href="#pl" x="1709" y="402"/><use href="#ob" x="1734" y="402"/><text x="1749" y="408">binder_4</text><rect x="1817" y="394" width="3" height="15" fill="#505050"/>
<use href="#pl" x="1709" y="427"/><use href="#ob" x="1734" y="427"/><text x="1749" y="433">binder_5</text><rect x="1817" y="419" width="3" height="15" fill="#505050"/>
<use href="#pl" x="1709" y="452"/><use href="#ob" x="1734" y="452"/><text x="1749" y="458">binder_6</text><rect x="1817" y="444" width="3" height="15" fill="#505050"/>
<use href="#mn" x="1684" y="477"/><use href="#ob" x="1709" y="477"/><text x="1725" y="483">case_3</text>
<use href="#pl" x="1709" y="502"/><use href="#me" x="1734" y="502"/><text x="1749" y="508">case_3</text><rect x="1807" y="494" width="3" height="15" fill="#505050"/><use href="#ma" x="1831" y="502"/>
<use href="#pl" x="1709" y="527"/><use href="#ob" x="1734" y="527"/><text x="1749" y="533">binder_7</text><rect x="1817" y="519" width="3" height="15" fill="#505050"/>
<use href="#pl" x="1709" y="552"/><use href="#ob" x="1734" y="552"/><text x="1749" y="558">binder_8</text><rect x="1817" y="544" width="3" height="15" fill="#505050"/>
<use href="#pl" x="1709" y="577"/><use href="#ob" x="1734" y="577"/><text x="1749" y="583">binder_9</text><rect x="1817" y="569" width="3" height="15" fill="#505050"/>
<use href="#mn" x="1684" y="602"/><use href="#ob" x="1709" y="602"/><text class="w" x="1725" y="608">case_4</text>
<use href="#pl" x="1709" y="627"/><use href="#me" x="1734" y="627"/><text x="1749" y="633">case_4</text><rect x="1807" y="619" width="3" height="15" fill="#505050"/><circle cx="1831" cy="627" r="10.500" fill="#a5a5a5"/><use href="#ma" x="1831" y="627"/>
<use href="#pl" x="1709" y="652"/><use href="#ob" x="1734" y="652"/><text x="1749" y="658">binder_10</text><rect x="1825" y="644" width="3" height="15" fill="#505050"/>
<use href="#pl" x="1709" y="677"/><use href="#ob" x="1734" y="677"/><text x="1749" y="683">binder_11</text><rect x="1825" y="669" width="3" height="15" fill="#505050"/>
<use href="#pl" x="1709" y="702"/><use href="#ob" x="1734" y="702"/><text x="1749" y="708">binder_12</text><rect x="1825" y="694" width="3" height="15" fill="#505050"/>
<g clip-path="url(#colclip)">
<use href="#ms" x="1840" y="277"/><use href="#ms" x="1840" y="302"/><use href="#ms" x="1840" y="327"/><use href="#ms" x="1840" y="402"/><use href="#ms" x="1840" y="427"/><use href="#ms" x="1840" y="452"/><use href="#ms" x="1840" y="527"/><use href="#ms" x="1840" y="552"/><use href="#ms" x="1840" y="577"/><use href="#ms" x="1849" y="652"/><use href="#ms" x="1849" y="677"/><use href="#ms" x="1849" y="702"/>
</g>
<!-- restrict columns -->
<use href="#ey" x="1858" y="177"/><use href="#cu" x="1884" y="178"/><use href="#ca" x="1908" y="177"/>
<use href="#ey" x="1858" y="227"/><use href="#cu" x="1884" y="228"/><use href="#ca" x="1908" y="227"/>
<use href="#ey" x="1858" y="277"/><use href="#cu" x="1884" y="278"/><use href="#ca" x="1908" y="277"/>
<use href="#ey" x="1858" y="302"/><use href="#cu" x="1884" y="303"/><use href="#ca" x="1908" y="302"/>
<use href="#ey" x="1858" y="327"/><use href="#cu" x="1884" y="328"/><use href="#ca" x="1908" y="327"/>
<use href="#ey" x="1858" y="352"/><use href="#cu" x="1884" y="353"/><use href="#ca" x="1908" y="352"/>
<use href="#ey" x="1858" y="402"/><use href="#cu" x="1884" y="403"/><use href="#ca" x="1908" y="402"/>
<use href="#ey" x="1858" y="427"/><use href="#cu" x="1884" y="428"/><use href="#ca" x="1908" y="427"/>
<use href="#ey" x="1858" y="452"/><use href="#cu" x="1884" y="453"/><use href="#ca" x="1908" y="452"/>
<use href="#ey" x="1858" y="477"/><use href="#cu" x="1884" y="478"/><use href="#ca" x="1908" y="477"/>
<use href="#ey" x="1858" y="527"/><use href="#cu" x="1884" y="528"/><use href="#ca" x="1908" y="527"/>
<use href="#ey" x="1858" y="552"/><use href="#cu" x="1884" y="553"/><use href="#ca" x="1908" y="552"/>
<use href="#ey" x="1858" y="577"/><use href="#cu" x="1884" y="578"/><use href="#ca" x="1908" y="577"/>
<use href="#ey" x="1858" y="602"/><use href="#cu" x="1884" y="603"/><use href="#ca" x="1908" y="602"/>
<use href="#ey" x="1858" y="652"/><use href="#cu" x="1884" y="653"/><use href="#ca" x="1908" y="652"/>
<use href="#ey" x="1858" y="677"/><use href="#cu" x="1884" y="678"/><use href="#ca" x="1908" y="677"/>
<use href="#ey" x="1858" y="702"/><use href="#cu" x="1884" y="703"/><use href="#ca" x="1908" y="702"/>

<!-- outliner scrollbar -->
<rect x="1627" y="750" width="286" height="16" rx="8" fill="#656565"/>
<rect x="1627" y="750" width="213" height="16" rx="8" fill="url(#thh)"/>
<path d="M1622 757 1634 769M1622 762 1630 770" stroke="#a5a5a5"/>

<!-- properties -->
<rect x="1621" y="772" width="299" height="1" fill="#141414"/>
<rect x="1621" y="773" width="299" height="268" fill="#727272"/>
<path d="M1621 804.500H1920" stroke="#666"/>
<rect class="g" x="1632.500" y="777.500" width="39" height="23" rx="6" fill="url(#drk)"/>
<rect x="1638" y="782" width="17" height="6" rx="3" fill="#ddd"/><rect x="1638" y="791" width="17" height="6" rx="3" fill="#ddd"/><use href="#ud" x="1664" y="789"/>
<rect class="g" x="1682.500" y="777.500" width="237.500" height="23" rx="5" fill="url(#drk)"/>
<path d="M1707.500 777V801M1732.500 777V801M1757.500 777V801M1782.500 777V801M1807.500 777V801M1832.500 777V801M1857.500 777V801M1907.500 777V801" stroke="#3d3d3d"/>
<rect x="1882.500" y="777.500" width="25" height="23" fill="#5680c4"/>
<use href="#ca" x="1694" y="789"/><use href="#rl" x="1720" y="789" opacity=".75"/><use href="#sc" x="1745" y="790" opacity=".75"/>
<circle cx="1770" cy="789" r="8" fill="url(#glb)" opacity=".9"/><use href="#cb" x="1795" y="789" opacity=".8"/>
<path d="M1814 794 1824 784" stroke="#ccc" stroke-width="5" stroke-dasharray="6 3" fill="none"/>
<path d="M1838 796 1848 786M1848 786Q1847 781 1853 781L1850 785 1853 788Q1852 789 1848 786" stroke="#7f9fc8" stroke-width="3" fill="none"/>
<path d="M1864 784H1876L1870 796Z" fill="none" stroke="#aaa"/>
<circle cx="1894" cy="789" r="8" fill="url(#mt2)" stroke="#222"/>
<rect x="1912" y="784" width="8" height="10" fill="#c88"/>
<path d="M1906 772 1920 786M1911 772 1920 781" stroke="#a5a5a5"/>

<path d="M1637 833 1650 821" stroke="#222" stroke-width="3"/><path d="M1640 827 1650 836 1650 829 1654 825 1648 819 1644 823Z" fill="#eee" stroke="#222"/>
<use href="#sc" x="1669" y="827"/><path d="M1687 823 1692 827 1687 831Z" fill="#3a3a3a"/>
<use href="#cb" x="1719" y="827"/><text x="1735" y="833">case_4</text><path d="M1797 823 1802 827 1797 831Z" fill="#3a3a3a"/>
<circle cx="1828" cy="827" r="8" fill="url(#mt2)" stroke="#222"/><text x="1845" y="833">case</text>

<rect x="1632.500" y="860.500" width="220" height="147" rx="5" fill="#777" stroke="#3e3e3e"/>
<rect x="1638" y="866" width="208" height="22" fill="#4d7bc5"/>
<circle cx="1649" cy="877" r="9" fill="#2a2a2e"/><circle cx="1646" cy="873" r="1.500" fill="#bbb"/>
<text x="1666" y="884" style="fill:#ececec">case</text>
<circle cx="1649" cy="996" r="5" fill="none" stroke="#444"/><path d="M1646 996H1652M1649 993V999" stroke="#444"/>
<path d="M1745 994.500H1764M1745 998.500H1764" stroke="#ddd"/>
<path class="g" d="M1863.500 884V866Q1863.500 860.500 1869 860.500H1882Q1887.500 860.500 1887.500 866V884Z" fill="url(#btn)"/>
<rect class="g" x="1863.500" y="884.500" width="24" height="24" fill="url(#btn)"/>
<path class="g" d="M1863.500 908.500V927Q1863.500 932.500 1869 932.500H1882Q1887.500 932.500 1887.500 927V908.500Z" fill="url(#drk)"/>
<use href="#pb" x="1875.500" y="872"/><path d="M1869 896H1882" stroke="#222" stroke-width="5"/><path d="M1869 896H1882" stroke="#eee" stroke-width="3"/>
<path d="M1869 915H1882L1876 926Z" fill="#111"/><path d="M1876 926 1878 917" stroke="#ccc"/>

<path class="g" d="M1662 1015.500H1638Q1632.500 1015.500 1632.500 1021V1032Q1632.500 1038.500 1638 1038.500H1662Z" fill="url(#drk)"/>
<circle cx="1646" cy="1027" r="8" fill="url(#mt2)" stroke="#222"/><use href="#ud" x="1657" y="1027"/>
<rect class="g" x="1662.500" y="1015.500" width="42" height="23" fill="url(#btn)"/>
<rect class="g" x="1704.500" y="1015.500" width="25" height="23" fill="url(#btn)"/>
<rect class="g" x="1729.500" y="1015.500" width="20" height="23" fill="url(#btn)"/>
<rect class="g" x="1749.500" y="1015.500" width="20" height="23" fill="url(#btn)"/>
<path class="g" d="M1769.500 1015.500H1785Q1790.500 1015.500 1790.500 1021V1032Q1790.500 1038.500 1785 1038.500H1769.500Z" fill="url(#btn)"/>
<text x="1671" y="1033">case</text><text class="m" x="1715" y="1033">4</text><text class="m" x="1738" y="1033">F</text>
<use href="#pb" x="1759" y="1026"/><use href="#xb" x="1780" y="1026"/>
<rect class="g" x="1801.500" y="1015.500" width="86" height="23" rx="6" fill="url(#drk)"/>
<text class="w" x="1811" y="1033">Data</text><use href="#ud" x="1880" y="1027"/>
<rect x="1899" y="810" width="16" height="225" rx="8" fill="#656565"/>
<rect x="1899" y="810" width="16" height="47" rx="8" fill="url(#thm)"/>
<path d="M1622 1027 1635 1040M1622 1032 1630 1040" stroke="#a5a5a5"/>
</svg>
</body></html>
